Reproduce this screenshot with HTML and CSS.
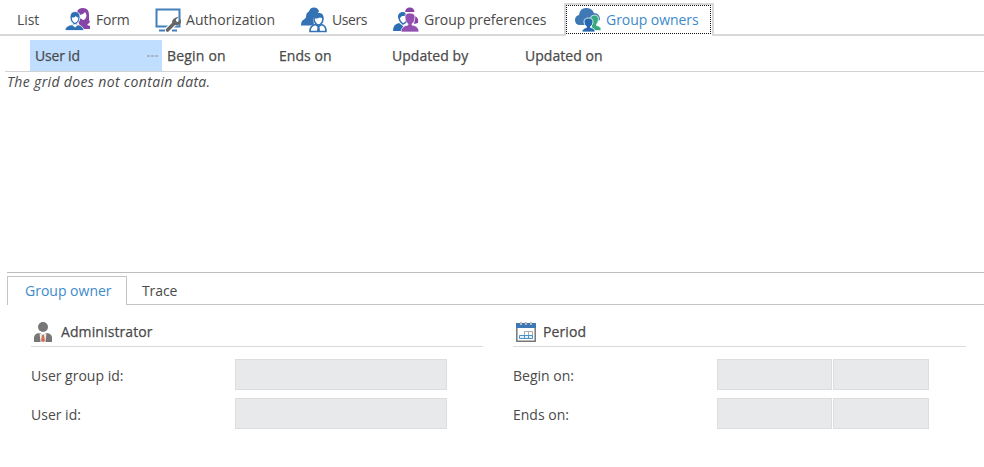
FILE: index.html
```html
<!DOCTYPE html>
<html lang="en">
<head>
<meta charset="utf-8">
<title>Group owners</title>
<link rel="stylesheet" href="styles.css">
</head>
<body>
<nav class="tabs">
  <div class="tab tab-list"><span>List</span></div>
  <div class="tab tab-form">
    <svg class="icon" viewBox="0 0 26 26"><path fill="#8743a6" d="M12 5q1-4 6-4 6 0 6 7v5l1 2-2 2-1 1 3 1v3h-9l-3-8z"/><path d="M15 8q4-1 5-3 1.500 2 1.500 4-1 4-3.500 4l-3-2z" fill="#fff"/><path d="M5 10.500q0-6 5-6t5 6q0 4-3 6v1q6 1 7 6H0q0-5 8-6v-1q-3-2-3-6z" fill="#2c6fb4" stroke="#fff" stroke-width=".8"/><path d="M6.800 10.500q3 .5 4-1.500 1 1.500 2.600 1.500 0 4-3.300 5.500-3.300-1.500-3.300-5.500zM7 18l3 2.500 3-2.500-3-1z" fill="#fff"/></svg><span>Form</span></div>
  <div class="tab tab-auth">
    <svg class="icon" viewBox="0 0 26 26"><path d="M1.500 2.500h23v17h-23z" fill="#fff" stroke="#4180ba" stroke-width="2"/><path d="M4 23.500h6M17 23.500h5" stroke="#4180ba" stroke-width="1.800"/><path d="M12 23.500l8-8" stroke="#fff" stroke-width="6"/><path d="M12.500 23l7.500-7.500" stroke="#666" stroke-width="3.600" stroke-linecap="round"/><path d="M24 9.500l-3 3v2l2 .5 3-3q1 5-3 6-5 1-6-3 0-4 7-5.500z" fill="#666"/></svg><span>Authorization</span></div>
  <div class="tab tab-users">
    <svg class="icon" viewBox="0 0 26 26"><path d="M8 4.500q1-4 5-4t5 4l-3 3-3 4 1 6-3 1H0q0-5 3-6l2-2q0-5 3-6z" fill="#3272b5"/><path d="M9 24.500q0-6 5.500-7l3 2 3-2q4.500 1 4.500 7z" fill="#fff" stroke="#3272b5" stroke-width="1.600"/><path d="M13 12q0-5.500 4.500-5.500t4.500 5.500q-.5 5-4.500 6-4-1-4.500-6z" fill="#fff" stroke="#3272b5" stroke-width="1.600"/><path d="M13 11.500q0-5 4.500-5t4.500 5l-3-1-3 1zM16.500 19.500h2l.5 5h-3z" fill="#3272b5"/></svg><span>Users</span></div>
  <div class="tab tab-prefs">
    <svg class="icon" viewBox="0 0 26 26"><path d="M0 24q0-7 6-8l4 3v5z" fill="#2c6fb4"/><path d="M6 10q0-4 5-4l2 2v7l-3 2q-4-3-4-7z" fill="#fff" stroke="#2c6fb4" stroke-width="1.500"/><path d="M5 10q0-5 6-5l1 4-3 0-3 3z" fill="#2c6fb4"/><path d="M12 5q1-5 5-4.500 4 0 4.500 4.500zM22 9q4 2 3 7l-4 1z" fill="#8743a6"/><path d="M12 10q0-4 5-4t5 4q0 5-3 7v1q7 1 7 7H8q0-6 7-7v-1q-3-2-3-7z" fill="#9350b0" stroke="#fff" stroke-width=".7"/></svg><span>Group preferences</span></div>
  <div class="tab tab-owners active">
    <svg class="icon" viewBox="0 0 26 26"><path d="M5 18q-5 0-5-5 0-4 4-5 1-7 7-7 6 0 8 5 6 0 6 7l-5 2-5 3z" fill="#3f79b5"/><path d="M15.500 11.500q0-3.500 4-3.500t4 3.500q0 4-2 6v1q5 1 4.500 5h-9z" fill="#35a97c" stroke="#fff" stroke-width=".7"/><path d="M9 15q0-4 4.500-4t4.500 4q0 3-2.500 4.500v1q5 1 4.500 4.500H7q0-3.500 4.500-4.500v-1Q9 18 9 15z" fill="#2568ad" stroke="#fff" stroke-width=".8"/></svg><span>Group owners</span></div>
  <div class="rest"></div>
</nav>
<div class="grid-head">
  <div class="col col-user"><span>User id</span><i class="dots"></i></div>
  <div class="col col-begin"><span>Begin on</span></div>
  <div class="col col-ends"><span>Ends on</span></div>
  <div class="col col-by"><span>Updated by</span></div>
  <div class="col"><span>Updated on</span></div>
</div>
<div class="grid-body">The grid does not contain data.</div>
<div class="subtabs">
  <div class="subtab current"><span>Group owner</span></div>
  <div class="subtab trace"><span>Trace</span></div>
</div>
<main class="form">
  <section>
    <h2><svg class="person" viewBox="0 0 20 20"><circle cx="10" cy="5" r="5" fill="#777"/><path d="M1 20v-5q1-4 6-4l3 2 3-2q5 0 6 4v5z" fill="#777"/><path d="M6.500 11l3.500 2 3.500-2-1 9h-5z" fill="#eee"/><path d="M9 13h2l1 6-2 1-2-1z" fill="#d66e55"/></svg><span>Administrator</span></h2>
    <div class="row"><label>User group id:</label><div class="field wide"></div></div>
    <div class="row"><label>User id:</label><div class="field wide"></div></div>
  </section>
  <section>
    <h2><svg class="cal" viewBox="0 0 20 20"><path d="M.8 2h18.400v17.200H.8z" fill="#fff" stroke="#777" stroke-width="1.500"/><path d="M0 1h20v5H0z" fill="#3b78b5"/><path d="M5 0v3M10 0v3M15 0v3" stroke="#fff" stroke-width="2"/><path d="M5 0v3M10 0v3M15 0v3" stroke="#777"/><path d="M8.500 9.500h8v4h-8zM12.500 9.500v4" fill="#fff" stroke="#aaa"/><path d="M3.500 13.500h13v3h-13zM8.500 13.500v3M12.500 13.500v3" fill="#e4f2fb" stroke="#4c92c6"/></svg><span>Period</span></h2>
    <div class="row"><label>Begin on:</label><div class="field date"></div><div class="field time"></div></div>
    <div class="row"><label>Ends on:</label><div class="field date"></div><div class="field time"></div></div>
  </section>
</main>
</body>
</html>
```
FILE: styles.css
```css
* { box-sizing: border-box; }
body { margin: 0; width: 984px; height: 467px; overflow: hidden; background: #fff; color: #4a4a4a; font: 14px/20px "Open Sans", "Noto Sans", sans-serif; }
svg { display: block; flex: none; }
span, label { white-space: nowrap; }
.tabs { display: flex; height: 36px; padding-top: 3px; }
.tab { display: flex; align-items: center; border-bottom: 2px solid #d9d9d9; padding-top: 2px; flex: none; }
.icon { width: 26px; height: 26px; margin-right: 5px; }
.tab-list { width: 65px; padding-left: 17px; letter-spacing: -.1px; }
.tab-form { width: 90px; letter-spacing: -.2px; }
.tab-auth { width: 146px; letter-spacing: .05px; }
.tab-users { width: 91px; letter-spacing: -.4px; }
.tab-prefs { width: 172px; padding-left: 1px; letter-spacing: -.05px; }
.tab-owners { width: 150px; padding: 0 0 2px 9px; border: 2px solid #d9d9d9; border-bottom: 0; position: relative; color: #3d8acb; letter-spacing: -.05px; }
.tab-owners::after { content: ""; position: absolute; inset: 0 1px 2px 0; border: 1px dotted #111; }
.rest { flex: 1; border-bottom: 2px solid #d9d9d9; }
.grid-head { display: flex; height: 36px; margin-left: 5px; padding: 4px 0 0 25px; border-bottom: 1px solid #d2d2d2; letter-spacing: .05px; -webkit-text-stroke: .25px currentColor; }
.col { display: flex; align-items: center; height: 31px; }
.col-user { width: 132px; margin-right: 5px; padding: 0 4px 0 5px; justify-content: space-between; background: #c0deff; letter-spacing: -.2px; }
.col-begin { width: 112px; letter-spacing: .2px; }
.col-ends { width: 113px; }
.col-by { width: 133px; }
.dots { width: 11px; height: 2px; background: repeating-linear-gradient(90deg, #a9b6c5 0 3px, transparent 3px 4px); }
.grid-body { height: 200px; padding: 0 0 0 7px; font-style: italic; letter-spacing: .35px; }
.subtabs { display: flex; height: 33px; margin-left: 7px; padding-top: 3px; border-top: 1px solid #bdbdbd; }
.subtab { display: flex; align-items: center; }
.current { width: 120px; padding-left: 17px; border: 1px solid #c4c4c4; border-bottom: 0; color: #3d8acb; }
.trace { flex: 1; padding: 1px 0 0 15px; border-bottom: 1px solid #c4c4c4; letter-spacing: -.1px; }
.form { display: grid; grid-template-columns: 452px 453px; column-gap: 30px; padding: 13px 0 0 31px; }
h2 { display: flex; align-items: center; height: 29px; margin: 0 0 12px; border-bottom: 1px solid #dadada; font-size: 14px; font-weight: 400; letter-spacing: .1px; -webkit-text-stroke: .25px currentColor; }
.person, .cal { width: 20px; height: 20px; margin: 0 8px 0 2px; }
.cal { margin: 0 7px 0 3px; }
.row { display: flex; height: 31px; align-items: center; margin-bottom: 8px; }
label { width: 204px; padding-top: 2px; }
.field { height: 31px; background: #e8e9eb; border: 1px solid #dcdddd; }
.wide { width: 212px; }
.date { width: 115px; margin-right: 1px; }
.time { width: 96px; }
```
